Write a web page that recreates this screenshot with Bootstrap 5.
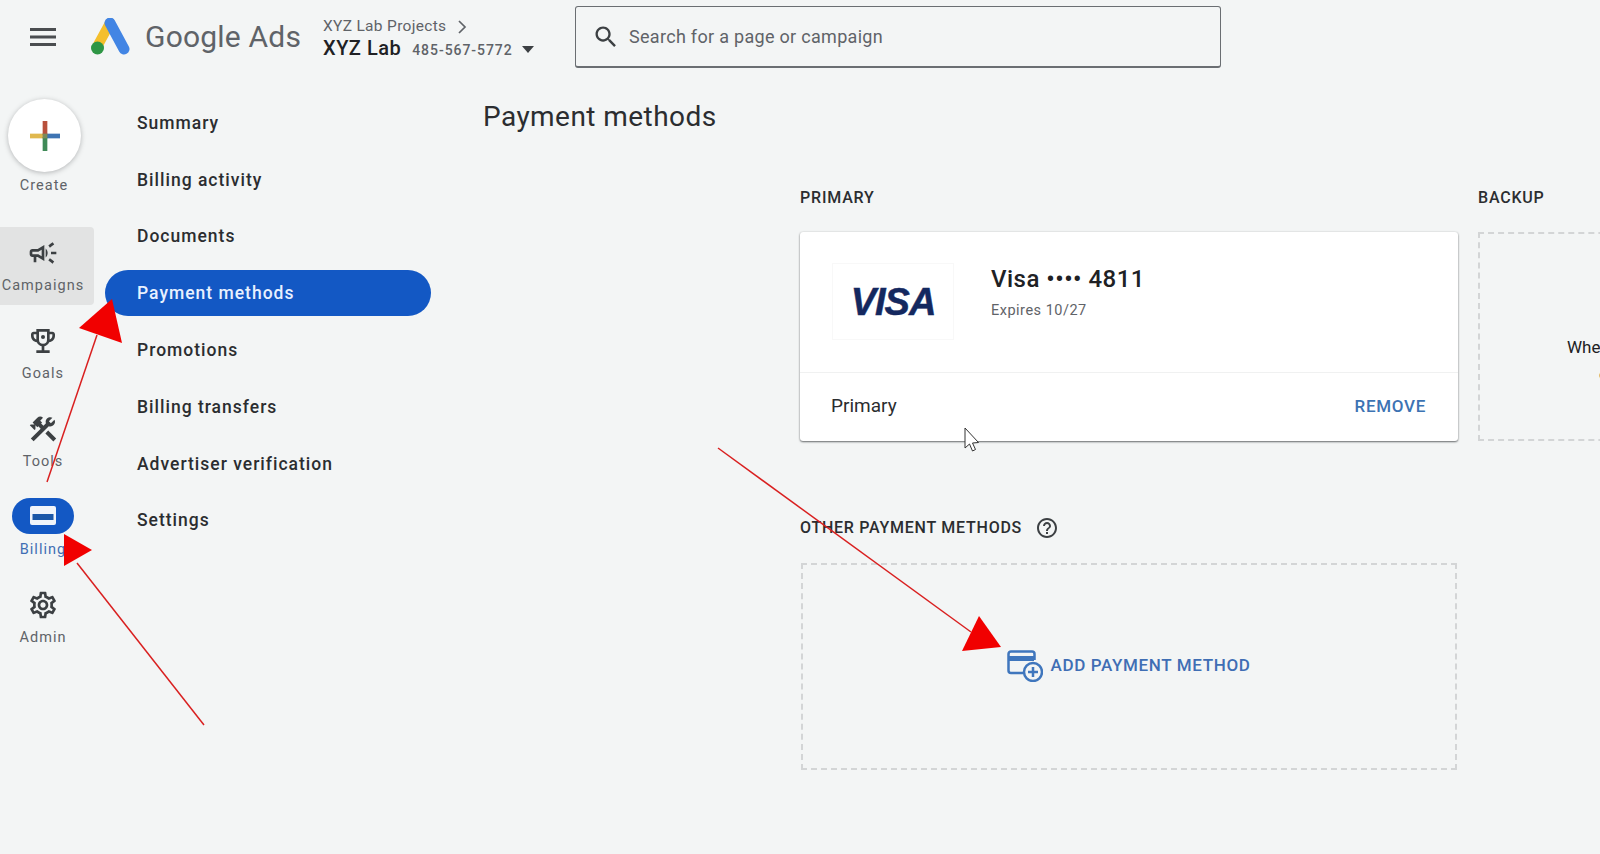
<!DOCTYPE html>
<html lang="en">
<head>
<meta charset="utf-8">
<title>Google Ads - Payment methods</title>
<link href="https://cdn.jsdelivr.net/npm/bootstrap@5.3.0/dist/css/bootstrap.min.css" rel="stylesheet">
<style>
html,body{height:100%;}
body{background:#f3f5f5;font-family:Roboto,"Liberation Sans",sans-serif;color:#202124;overflow:hidden;width:1600px;height:854px;position:relative;}
.ga-top{height:74px;}
.ga-burger{width:26px;margin-left:30px;margin-right:33px;color:#4a4d50;}
.ga-logo{width:42px;height:38px;margin-right:14px;}
.ga-brand{width:178px;font-size:30px;color:#5f6368;letter-spacing:.2px;line-height:1;}
.ga-account{width:252px;line-height:1;padding-top:3px;}
.ga-acc1{font-size:15.5px;color:#5f6368;margin-bottom:4px;letter-spacing:.32px;}
.ga-acc2{font-size:20px;font-weight:500;letter-spacing:.5px;}
.ga-acc3{font-size:14px;color:#5f6368;margin-left:11px;letter-spacing:.95px;}
.ga-caret{width:0;height:0;border-left:6.5px solid transparent;border-right:6.5px solid transparent;border-top:7px solid #3c4043;margin-left:9px;display:inline-block;vertical-align:2px;}
.ga-chev{margin-left:11px;}
.ga-search{width:646px;height:62px;border:1px solid #6a6e72;border-radius:3px;border-bottom-width:2px;padding-left:16px;gap:9px;color:#5f6368;font-size:18px;letter-spacing:.3px;}
.ga-rail{width:94px;padding-top:25px;}
.ga-create{width:73px;height:73px;background:#fff;border-radius:50%;box-shadow:0 1px 5px rgba(60,64,67,.35);margin-left:8px;}
.ga-railtxt{font-size:14.5px;color:#5f6368;line-height:1;letter-spacing:1.05px;font-weight:400;}
.ga-createlbl{width:88px;text-align:center;margin-top:7px;margin-bottom:33px;}
.ga-railitem{height:78px;margin-bottom:10px;padding-top:10px;width:86px;border-radius:0 4px 4px 0;}
.ga-railitem svg{height:32px;width:32px;display:block;margin-bottom:10px;color:#3c4043;}
.ga-railactive{background:#e2e3e3;width:94px;padding-right:8px;}
.ga-billpill{width:62px;height:36px;background:#1358c4;border-radius:18px;margin-top:-3px;margin-bottom:9px;}
.ga-billicon.ga-billicon{width:28px;height:21px;margin:0;}
.ga-billlbl{color:#3f6eb4;}
.ga-subnav{width:326px;margin-left:11px;padding-top:25.4px;gap:10.8px;}
.ga-subitem{height:46px;padding-left:32px;padding-top:1px;font-size:17.5px;font-weight:500;letter-spacing:1px;color:#2b2d30;border-radius:23px;}
.ga-subactive{background:#1358c4;color:#e8f1ff;}
.ga-main{padding-left:52px;flex:none;}
.ga-title{font-size:28px;font-weight:400;line-height:1;margin:29px 0 0;letter-spacing:.44px;color:#2b2d30;}
.ga-cols{padding-left:317px;margin-top:58.5px;gap:20px;}
.ga-col{width:658px;flex:none;}
.ga-head{font-size:16px;font-weight:500;line-height:1;height:42px;letter-spacing:.8px;color:#2b2d30;}
.ga-paycard{width:658px;height:209px;border:0;border-radius:3px;box-shadow:0 1px 2px rgba(60,64,67,.75),0 0 2px rgba(60,64,67,.15);}
.ga-cardtop{height:141px;padding:31px 0 0 32px;gap:37px;border-bottom:1px solid #f0f1f1;}
.ga-visabox{width:122px;height:77px;border:1px solid #f8f8f8;padding-top:2px;}
.ga-visa{font-family:"Liberation Sans",sans-serif;font-style:italic;font-weight:700;font-size:38px;color:#14285f;line-height:1;letter-spacing:-1px;-webkit-text-stroke:.5px #14285f;}
.ga-cardname{font-size:24px;font-weight:500;line-height:1;margin-top:4px;letter-spacing:.5px;}
.ga-cardexp{font-size:14.5px;color:#5f6368;line-height:1;margin-top:13px;letter-spacing:.5px;}
.ga-cardfoot{height:68px;padding:0 32px 0 31px;}
.ga-primary{font-size:19px;color:#2b2d30;}
.ga-remove{font-size:17px;font-weight:500;color:#3c73b3;letter-spacing:.7px;}
.ga-dash{height:209px;border:2px dashed #d3d5d6;}
.ga-backup{padding:100px 0 0 87px;font-size:17px;line-height:27px;white-space:nowrap;}
.ga-back2{margin-left:32px;}
.ga-otherhead{margin-top:79px;height:43px;gap:13px;letter-spacing:.75px;}
.ga-other{width:656px;height:207px;margin-left:1px;gap:7px;color:#3f6eb4;font-size:17px;font-weight:500;letter-spacing:.65px;}
.ga-overlay{position:absolute;left:0;top:0;width:1600px;height:854px;pointer-events:none;}
</style>
</head>
<body>
<header class="ga-top d-flex align-items-center">
  <svg class="ga-burger flex-shrink-0" viewBox="3 6 18 12" height="18" preserveAspectRatio="none"><path fill="currentColor" d="M3 18h18v-2H3v2zm0-5h18v-2H3v2zm0-7v2h18V6H3z"/></svg>
  <svg class="ga-logo flex-shrink-0" viewBox="0 0 42 38"><path d="M21 5 L9 27" stroke="#f4bf2c" stroke-width="10" stroke-linecap="round" fill="none"/><path d="M21 5 L35 31" stroke="#4285e4" stroke-width="11" stroke-linecap="round" fill="none"/><circle cx="8.500" cy="30" r="6.500" fill="#2e9645"/></svg>
  <div class="ga-brand flex-shrink-0">Google Ads</div>
  <div class="ga-account flex-shrink-0">
    <div class="ga-acc1 d-flex align-items-center">XYZ Lab Projects<svg class="ga-chev" width="12" height="14" viewBox="0 0 12 14"><path d="M2 1l6 6-6 6" stroke="#5f6368" stroke-width="1.700" fill="none"/></svg></div>
    <div class="ga-acc2">XYZ Lab<span class="ga-acc3">485-567-5772</span><span class="ga-caret"></span></div>
  </div>
  <div class="ga-search d-flex align-items-center flex-shrink-0">
    <svg width="28" height="28" viewBox="0 0 24 24"><path fill="#3c4043" d="M15.5 14h-.79l-.28-.27C15.41 12.59 16 11.11 16 9.5 16 5.91 13.09 3 9.5 3S3 5.91 3 9.5 5.91 16 9.5 16c1.61 0 3.09-.59 4.23-1.57l.27.28v.79l5 4.99L20.49 19l-4.99-5zm-6 0C7.01 14 5 11.99 5 9.5S7.01 5 9.5 5 14 7.01 14 9.5 11.99 14 9.5 14z"/></svg>
    <span>Search for a page or campaign</span>
  </div>
</header>
<div class="d-flex">
  <nav class="ga-rail flex-shrink-0">
    <div class="ga-create d-flex align-items-center justify-content-center">
      <svg width="30" height="30" viewBox="0 0 32 32"><rect x="0" y="13.500" width="15" height="5" fill="#e0b84e"/><rect x="17" y="13.500" width="15" height="5" fill="#3e74b3"/><rect x="13.500" y="0" width="5" height="15" fill="#b8503c"/><rect x="13.500" y="17" width="5" height="15" fill="#3f8a57"/><rect x="13.500" y="13.500" width="5" height="5" fill="#7c8a5a"/></svg>
    </div>
    <div class="ga-railtxt ga-createlbl">Create</div>
    <div class="ga-railitem ga-railactive d-flex flex-column align-items-center">
      <svg viewBox="0 0 24 24"><path fill="currentColor" d="M18 11v2h4v-2h-4zm-2 6.610c.96.71 2.210 1.650 3.200 2.390.4-.53.8-1.070 1.200-1.600-.99-.74-2.240-1.680-3.200-2.400-.4.54-.8 1.080-1.200 1.610zM20.400 5.600c-.4-.53-.8-1.070-1.200-1.600-.99.74-2.240 1.680-3.200 2.400.4.53.8 1.070 1.200 1.600.96-.72 2.210-1.650 3.200-2.400zM4 9c-1.100 0-2 .9-2 2v2c0 1.100.9 2 2 2h1v4h2v-4h1l5 3V6L8 9H4zm5.030 1.710L11 9.530v4.940l-1.970-1.180-.48-.29H4v-2h4.550l.48-.29zM15.500 12c0-1.330-.58-2.530-1.500-3.350v6.690c.92-.81 1.500-2.010 1.500-3.340z"/></svg>
      <div class="ga-railtxt">Campaigns</div>
    </div>
    <div class="ga-railitem d-flex flex-column align-items-center">
      <svg viewBox="0 0 24 24"><path fill="currentColor" d="M19 5h-2V3H7v2H5c-1.100 0-2 .9-2 2v1c0 2.550 1.920 4.630 4.390 4.940.63 1.500 1.980 2.630 3.610 2.960V19H7v2h10v-2h-4v-3.100c1.630-.33 2.980-1.460 3.610-2.960C19.080 12.630 21 10.550 21 8V7c0-1.100-.9-2-2-2zM5 8V7h2v3.820C5.840 10.400 5 9.300 5 8zm14 0c0 1.300-.84 2.400-2 2.820V7h2v1z"/><path fill="#f3f5f5" d="M9 5h6v6a3 3 0 0 1-6 0z"/><circle cx="12" cy="9" r="1.500" fill="currentColor"/></svg>
      <div class="ga-railtxt">Goals</div>
    </div>
    <div class="ga-railitem d-flex flex-column align-items-center">
      <svg viewBox="0 0 24 24"><path fill="currentColor" d="M13.780 15.300L19.780 21.300L21.890 19.140L15.890 13.140L13.780 15.300Z M17.500 10.100C17.110 10.100 16.690 10.050 16.360 9.910L4.970 21.250L2.860 19.140L10.270 11.740L8.500 9.960L7.780 10.660L6.330 9.250V12.110L5.630 12.810L2.110 9.250L2.810 8.550H5.620L4.220 7.140L7.780 3.580C8.950 2.410 10.830 2.410 12 3.580L9.890 5.740L11.300 7.140L10.590 7.850L12.380 9.630L14.200 7.750C14.060 7.420 14 7 14 6.630C14 4.660 15.560 3.110 17.500 3.110C18.090 3.110 18.610 3.250 19.080 3.530L16.410 6.200L17.910 7.700L20.580 5.030C20.860 5.500 21 6 21 6.630C21 8.550 19.450 10.100 17.500 10.100Z"/></svg>
      <div class="ga-railtxt">Tools</div>
    </div>
    <div class="ga-railitem d-flex flex-column align-items-center">
      <div class="ga-billpill d-flex align-items-center justify-content-center flex-shrink-0">
        <svg class="ga-billicon" viewBox="0 0 28 21"><rect x="1" y="1" width="26" height="19" rx="2" fill="#f0f4fa"/><rect x="3.500" y="9" width="21" height="6" fill="#1b57a8"/></svg>
      </div>
      <div class="ga-railtxt ga-billlbl">Billing</div>
    </div>
    <div class="ga-railitem d-flex flex-column align-items-center">
      <svg viewBox="0 0 24 24"><path fill="currentColor" d="M19.430 12.980c.04-.32.07-.64.07-.98 0-.34-.03-.66-.07-.98l2.110-1.650c.19-.15.24-.42.12-.64l-2-3.460c-.09-.16-.26-.25-.44-.25-.06 0-.12.01-.17.03l-2.490 1c-.52-.4-1.080-.73-1.690-.98l-.38-2.650C14.460 2.180 14.250 2 14 2h-4c-.25 0-.46.18-.49.42l-.38 2.650c-.61.25-1.170.59-1.690.98l-2.490-1c-.06-.02-.12-.03-.18-.03-.17 0-.34.09-.43.25l-2 3.460c-.13.22-.07.49.12.64l2.110 1.650c-.04.32-.07.65-.07.98 0 .33.03.66.07.98l-2.110 1.650c-.19.15-.24.42-.12.64l2 3.460c.09.16.26.25.44.25.06 0 .12-.01.17-.03l2.490-1c.52.4 1.080.73 1.690.98l.38 2.650c.03.24.24.42.49.42h4c.25 0 .46-.18.49-.42l.38-2.650c.61-.25 1.170-.59 1.690-.98l2.490 1c.06.02.12.03.18.03.17 0 .34-.09.43-.25l2-3.460c.12-.22.07-.49-.12-.64l-2.110-1.650zm-1.980-1.710c.04.31.05.52.05.73 0 .21-.02.43-.05.73l-.14 1.130.89.7 1.080.84-.7 1.210-1.270-.51-1.040-.42-.9.68c-.43.32-.84.56-1.250.73l-1.060.43-.16 1.130-.2 1.350h-1.400l-.19-1.350-.16-1.130-1.060-.43c-.43-.18-.83-.41-1.230-.71l-.91-.7-1.060.43-1.270.51-.7-1.210 1.080-.84.89-.7-.14-1.130c-.03-.31-.05-.54-.05-.74s.02-.43.05-.73l.14-1.130-.89-.7-1.080-.84.7-1.210 1.270.51 1.040.42.9-.68c.43-.32.84-.56 1.250-.73l1.060-.43.16-1.130.2-1.350h1.390l.19 1.350.16 1.130 1.060.43c.43.18.83.41 1.230.71l.91.7 1.060-.43 1.270-.51.7 1.210-1.070.85-.89.7.14 1.130zM12 8c-2.210 0-4 1.790-4 4s1.790 4 4 4 4-1.790 4-4-1.790-4-4-4zm0 6c-1.100 0-2-.9-2-2s.9-2 2-2 2 .9 2 2-.9 2-2 2z"/></svg>
      <div class="ga-railtxt">Admin</div>
    </div>
  </nav>
  <div class="ga-subnav d-flex flex-column flex-shrink-0">
    <div class="ga-subitem d-flex align-items-center">Summary</div>
    <div class="ga-subitem d-flex align-items-center">Billing activity</div>
    <div class="ga-subitem d-flex align-items-center">Documents</div>
    <div class="ga-subitem ga-subactive d-flex align-items-center">Payment methods</div>
    <div class="ga-subitem d-flex align-items-center">Promotions</div>
    <div class="ga-subitem d-flex align-items-center">Billing transfers</div>
    <div class="ga-subitem d-flex align-items-center">Advertiser verification</div>
    <div class="ga-subitem d-flex align-items-center">Settings</div>
  </div>
  <main class="ga-main">
    <h1 class="ga-title">Payment methods</h1>
    <div class="ga-cols d-flex">
      <section class="ga-col">
        <div class="ga-head">PRIMARY</div>
        <div class="card ga-paycard">
          <div class="ga-cardtop d-flex">
            <div class="ga-visabox d-flex align-items-center justify-content-center flex-shrink-0"><span class="ga-visa">VISA</span></div>
            <div>
              <div class="ga-cardname">Visa •••• 4811</div>
              <div class="ga-cardexp">Expires 10/27</div>
            </div>
          </div>
          <div class="ga-cardfoot d-flex align-items-center justify-content-between">
            <span class="ga-primary">Primary</span>
            <span class="ga-remove">REMOVE</span>
          </div>
        </div>
        <div class="ga-head ga-otherhead d-flex align-items-start">OTHER PAYMENT METHODS
          <svg class="flex-shrink-0" width="24" height="24" viewBox="0 0 24 24" style="margin-top:-4px"><path fill="#3c4043" d="M11 18h2v-2h-2v2zm1-16C6.480 2 2 6.480 2 12s4.480 10 10 10 10-4.480 10-10S17.520 2 12 2zm0 18c-4.410 0-8-3.590-8-8s3.590-8 8-8 8 3.590 8 8-3.590 8-8 8zm0-14c-2.210 0-4 1.790-4 4h2c0-1.100.9-2 2-2s2 .9 2 2c0 2-3 1.750-3 5h2c0-2.250 3-2.500 3-5 0-2.210-1.790-4-4-4z"/></svg>
        </div>
        <div class="ga-dash ga-other d-flex align-items-center justify-content-center">
          <svg width="36" height="32" viewBox="0 0 36 32"><path d="M18 23H4a2.500 2.500 0 0 1-2.500-2.500V4A2.500 2.500 0 0 1 4 1.500h21A2.500 2.500 0 0 1 27.500 4v6" fill="none" stroke="#3f76bd" stroke-width="2.500"/><rect x="2" y="6" width="25" height="5" fill="#3f76bd"/><circle cx="26" cy="22" r="9" fill="#f3f5f5" stroke="#3f76bd" stroke-width="2.500"/><path d="M26 17v10M21 22h10" stroke="#3f76bd" stroke-width="2.500"/></svg>
          <span>ADD PAYMENT METHOD</span>
        </div>
      </section>
      <section class="ga-col">
        <div class="ga-head">BACKUP</div>
        <div class="ga-dash ga-backup">When your primary payment method fails
          <br><span class="ga-back2">ch</span></div>
      </section>
    </div>
  </main>
</div>
<svg class="ga-overlay" viewBox="0 0 1600 854">
  <g fill="#f10000" stroke="none">
    <polygon points="112,299 79,328 122,343"/>
    <polygon points="64,534 92,550 64,566"/>
    <polygon points="979,616 962,651 1001,647"/>
  </g>
  <g stroke="#d92020" stroke-width="1.500" fill="none">
    <line x1="47" y1="482" x2="97" y2="335"/>
    <line x1="204" y1="725" x2="77" y2="563"/>
    <line x1="718" y1="448" x2="971" y2="632"/>
  </g>
  <path d="M965 428v20l4.500-4 3 7 3-1.500-3-6.500 6-.5z" fill="#fff" stroke="#333" stroke-width="1"/>
</svg>
<script src="https://cdn.jsdelivr.net/npm/bootstrap@5.3.0/dist/js/bootstrap.bundle.min.js"></script>
</body>
</html>
